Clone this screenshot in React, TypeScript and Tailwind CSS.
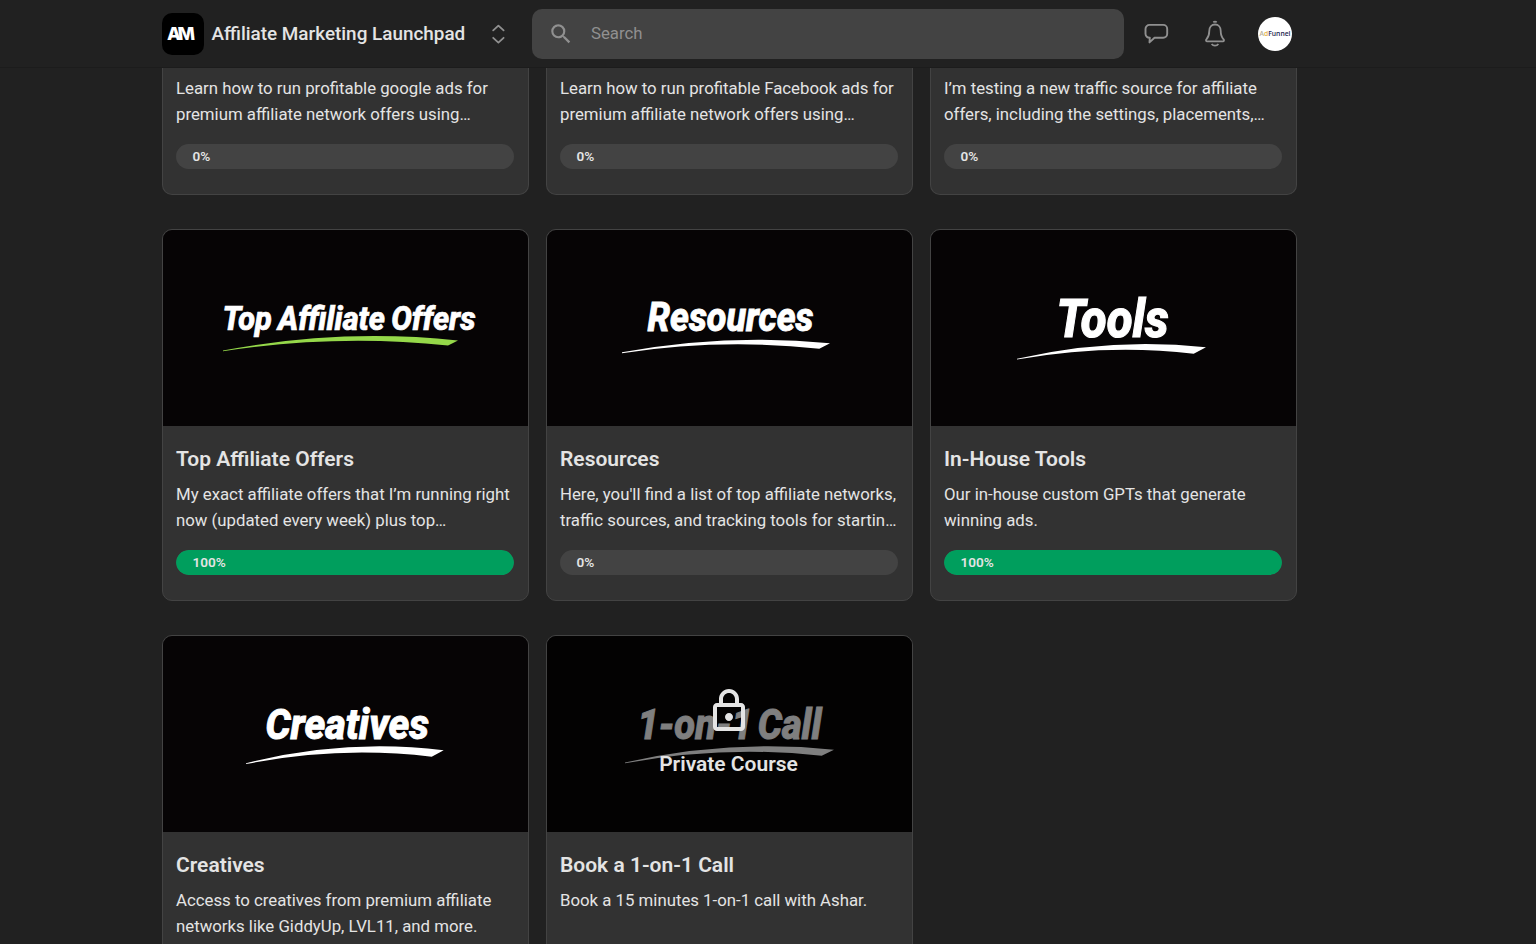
import { MdOutlineLock, MdSearch } from "react-icons/md";

type Art = {
  text: string;
  x: number;
  y: number;
  width: number;
  size: number;
  swoosh: string;
  wordSpacing?: number;
  color?: string;
};

type Course = {
  title: string;
  description: string;
  progress?: number;
  locked?: boolean;
  art: Art;
};

const scrolledCourses = [
  "Learn how to run profitable google ads for\npremium affiliate network offers using…",
  "Learn how to run profitable Facebook ads for\npremium affiliate network offers using…",
  "I’m testing a new traffic source for affiliate\noffers, including the settings, placements,…",
];

const courses: Course[] = [
  {
    title: "Top Affiliate Offers",
    description:
      "My exact affiliate offers that I’m running right\nnow (updated every week) plus top…",
    progress: 100,
    art: {
      text: "Top Affiliate Offers",
      x: 59.5,
      y: 100,
      width: 253,
      size: 34,
      wordSpacing: -1.5,
      swoosh: "M60 120.5Q178 98 295 110.5L285 115.5Q173 103.8 60 121.3Z",
      color: "#95d84a",
    },
  },
  {
    title: "Resources",
    description:
      "Here, you'll find a list of top affiliate networks,\ntraffic sources, and tracking tools for startin…",
    progress: 0,
    art: {
      text: "Resources",
      x: 100.5,
      y: 101.2,
      width: 166,
      size: 41,
      swoosh: "M75 122.3Q180 103 283 113.3L272.3 118.7Q174 108 75 123.2Z",
    },
  },
  {
    title: "In-House Tools",
    description: "Our in-house custom GPTs that generate\nwinning ads.",
    progress: 100,
    art: {
      text: "Tools",
      x: 125.5,
      y: 107.2,
      width: 112,
      size: 53,
      swoosh: "M86 128.8Q181 107 275 117.3L262.7 123.7Q175 113.6 86 129.6Z",
    },
  },
  {
    title: "Creatives",
    description:
      "Access to creatives from premium affiliate\nnetworks like GiddyUp, LVL11, and more.",
    art: {
      text: "Creatives",
      x: 102.5,
      y: 102.7,
      width: 163.5,
      size: 43,
      swoosh: "M83 127.3Q182 102.2 280.7 114.3L268.7 120.7Q176 109.5 83 128.1Z",
    },
  },
  {
    title: "Book a 1-on-1 Call",
    description: "Book a 15 minutes 1-on-1 call with Ashar.",
    locked: true,
    art: {
      text: "1-on-1 Call",
      x: 90.5,
      y: 102.7,
      width: 184,
      size: 43,
      wordSpacing: -5,
      swoosh: "M78 126.5Q183 102.7 287 113.7L274.7 119.7Q177 109 78 127.3Z",
    },
  },
];

export default function App() {
  return (
    <div className="h-[944px] w-[1536px] overflow-hidden bg-[#212121] font-[Roboto,sans-serif] text-[#e4e4e4]">
      <Header />
      <main className="ml-[162px] w-[1135px]">
        <div className="grid grid-cols-3 gap-x-[17px]">
          {scrolledCourses.map((description) => (
            <div
              key={description}
              className="h-[127px] rounded-b-[10px] border border-t-0 border-[#434343] bg-[#323232] pt-[8.35px] pr-[14px] pl-[13px]"
            >
              <Description text={description} />
              <Progress value={0} />
            </div>
          ))}
        </div>
        <div className="mt-[34px] grid grid-cols-3 gap-x-[17px] gap-y-[34px]">
          {courses.map((course) => (
            <CourseCard key={course.title} course={course} />
          ))}
        </div>
      </main>
    </div>
  );
}

const Header = () => {
  return (
    <header className="flex h-[68px] items-center border-b border-[#1c1c1c] pl-[162px]">
      <div className="h-[42px] w-[42px] shrink-0 rounded-[10px] bg-black">
        <svg width="42" height="42" viewBox="0 0 42 42">
          <g className="fill-white font-[Inter,sans-serif] text-[18px] font-extrabold">
            <text x="5" y="27">
              A
            </text>
            <text
              transform="translate(16.5 27) skewX(6)"
              textLength="17"
              lengthAdjust="spacingAndGlyphs"
            >
              M
            </text>
          </g>
        </svg>
      </div>
      <span className="mt-px ml-[7.5px] w-[254px] whitespace-nowrap text-[18.9px] font-medium">
        Affiliate Marketing Launchpad
      </span>
      <svg
        className="ml-[24.5px] shrink-0"
        width="17"
        height="22"
        viewBox="0 0 17 22"
        fill="none"
        stroke="#909090"
        strokeWidth="1.8"
        strokeLinecap="round"
        strokeLinejoin="round"
      >
        <path d="m3.2 7.4 5.2-4.8 5.2 4.8M3.2 14.8l5.2 4.8 5.2-4.8" />
      </svg>
      <div className="ml-[25px] flex h-[50px] w-[592px] shrink-0 items-center rounded-[10px] bg-[#434343] pl-4 text-[#909090]">
        <MdSearch size={26} />
        <span className="ml-[17px] text-[16.8px]">Search</span>
      </div>
      <ChatIcon />
      <BellIcon />
      <div className="ml-8 flex h-[34px] w-[34px] items-center justify-center overflow-hidden rounded-full bg-white">
        <svg width="34" height="34" viewBox="0 0 34 34">
          <text
            x="1.5"
            y="19"
            textLength="31"
            lengthAdjust="spacingAndGlyphs"
            className="fill-[#1d2750] font-['Open_Sans',sans-serif] text-[6.5px] font-semibold"
          >
            <tspan className="fill-[#b9b09a]">A</tspan>
            <tspan className="fill-[#e9b44c]">d</tspan>Funnel
          </text>
        </svg>
      </div>
    </header>
  );
};

const ChatIcon = () => (
  <svg
    className="ml-5 shrink-0"
    width="25"
    height="24"
    viewBox="0 0 25 24"
    fill="none"
    stroke="#909090"
    strokeWidth="1.9"
    strokeLinejoin="round"
  >
    <path d="M5.5 2.9h13.7a4 4 0 0 1 4 4v4.9a4 4 0 0 1-4 4H10.500l-5 4.600.3-4.600a4 4 0 0 1-4.300-4V6.900a4 4 0 0 1 4-4Z" />
  </svg>
);

const BellIcon = () => (
  <svg
    className="ml-[35px] shrink-0"
    width="22"
    height="28"
    viewBox="0 0 22 28"
    fill="none"
    stroke="#909090"
    strokeWidth="1.8"
    strokeLinejoin="round"
  >
    <path d="M11 4.500c-3.500 0-5.700 2.600-5.700 6.200 0 4.600-1.100 6.700-2.900 8.700-.8.900-.4 2 .8 2h15.600c1.200 0 1.600-1.100.8-2-1.800-2-2.900-4.100-2.900-8.700 0-3.600-2.200-6.200-5.700-6.200Z" />
    <path d="M9.300 2.300c.9-.7 2.500-.7 3.400 0M7.600 24c1.700 2.100 5.100 2.100 6.800 0" />
  </svg>
);

const CourseCard = ({ course }: { course: Course }) => {
  return (
    <div className="h-[372px] overflow-hidden rounded-[10px] border border-[#434343] bg-[#323232]">
      <div className="relative h-[196px] bg-[#060405]">
        <Thumbnail art={course.art} />
        {course.locked && (
          <div className="absolute inset-0 flex flex-col items-center bg-black/50 pt-[51px] pr-[2px]">
            <MdOutlineLock size={48} />
            <span className="mt-4 text-[21px] leading-[26px] font-semibold">
              Private Course
            </span>
          </div>
        )}
      </div>
      <div className="pt-[21px] pr-[14px] pl-[13px]">
        <h2 className="mb-[10.35px] text-[21px] leading-[25px] font-semibold whitespace-nowrap">
          {course.title}
        </h2>
        <Description text={course.description} />
        {course.progress !== undefined && <Progress value={course.progress} />}
      </div>
    </div>
  );
};

const Thumbnail = ({ art }: { art: Art }) => (
  <svg width="365" height="196" viewBox="0 0 365 196">
    <text
      x={art.x}
      y={art.y}
      fontSize={art.size}
      wordSpacing={art.wordSpacing}
      textLength={art.width}
      lengthAdjust="spacingAndGlyphs"
      strokeWidth={art.size * 0.022}
      className="fill-white stroke-white font-[Roboto,sans-serif] font-extrabold italic"
    >
      {art.text}
    </text>
    <path d={art.swoosh} fill={art.color ?? "#fff"} />
  </svg>
);

const Description = ({ text }: { text: string }) => (
  <p className="text-[16.8px] leading-[25.2px] whitespace-pre">{text}</p>
);

const Progress = ({ value }: { value: number }) => (
  <div className="relative mt-[17px] h-[25px] overflow-hidden rounded-full bg-[#434343]">
    <div
      className="h-full rounded-full bg-[#009e5d]"
      style={{ width: `${value}%` }}
    />
    <span className="absolute inset-x-0 top-0 pl-[16.5px] text-[13.6px] leading-[24px] font-semibold">
      {value}%
    </span>
  </div>
);
